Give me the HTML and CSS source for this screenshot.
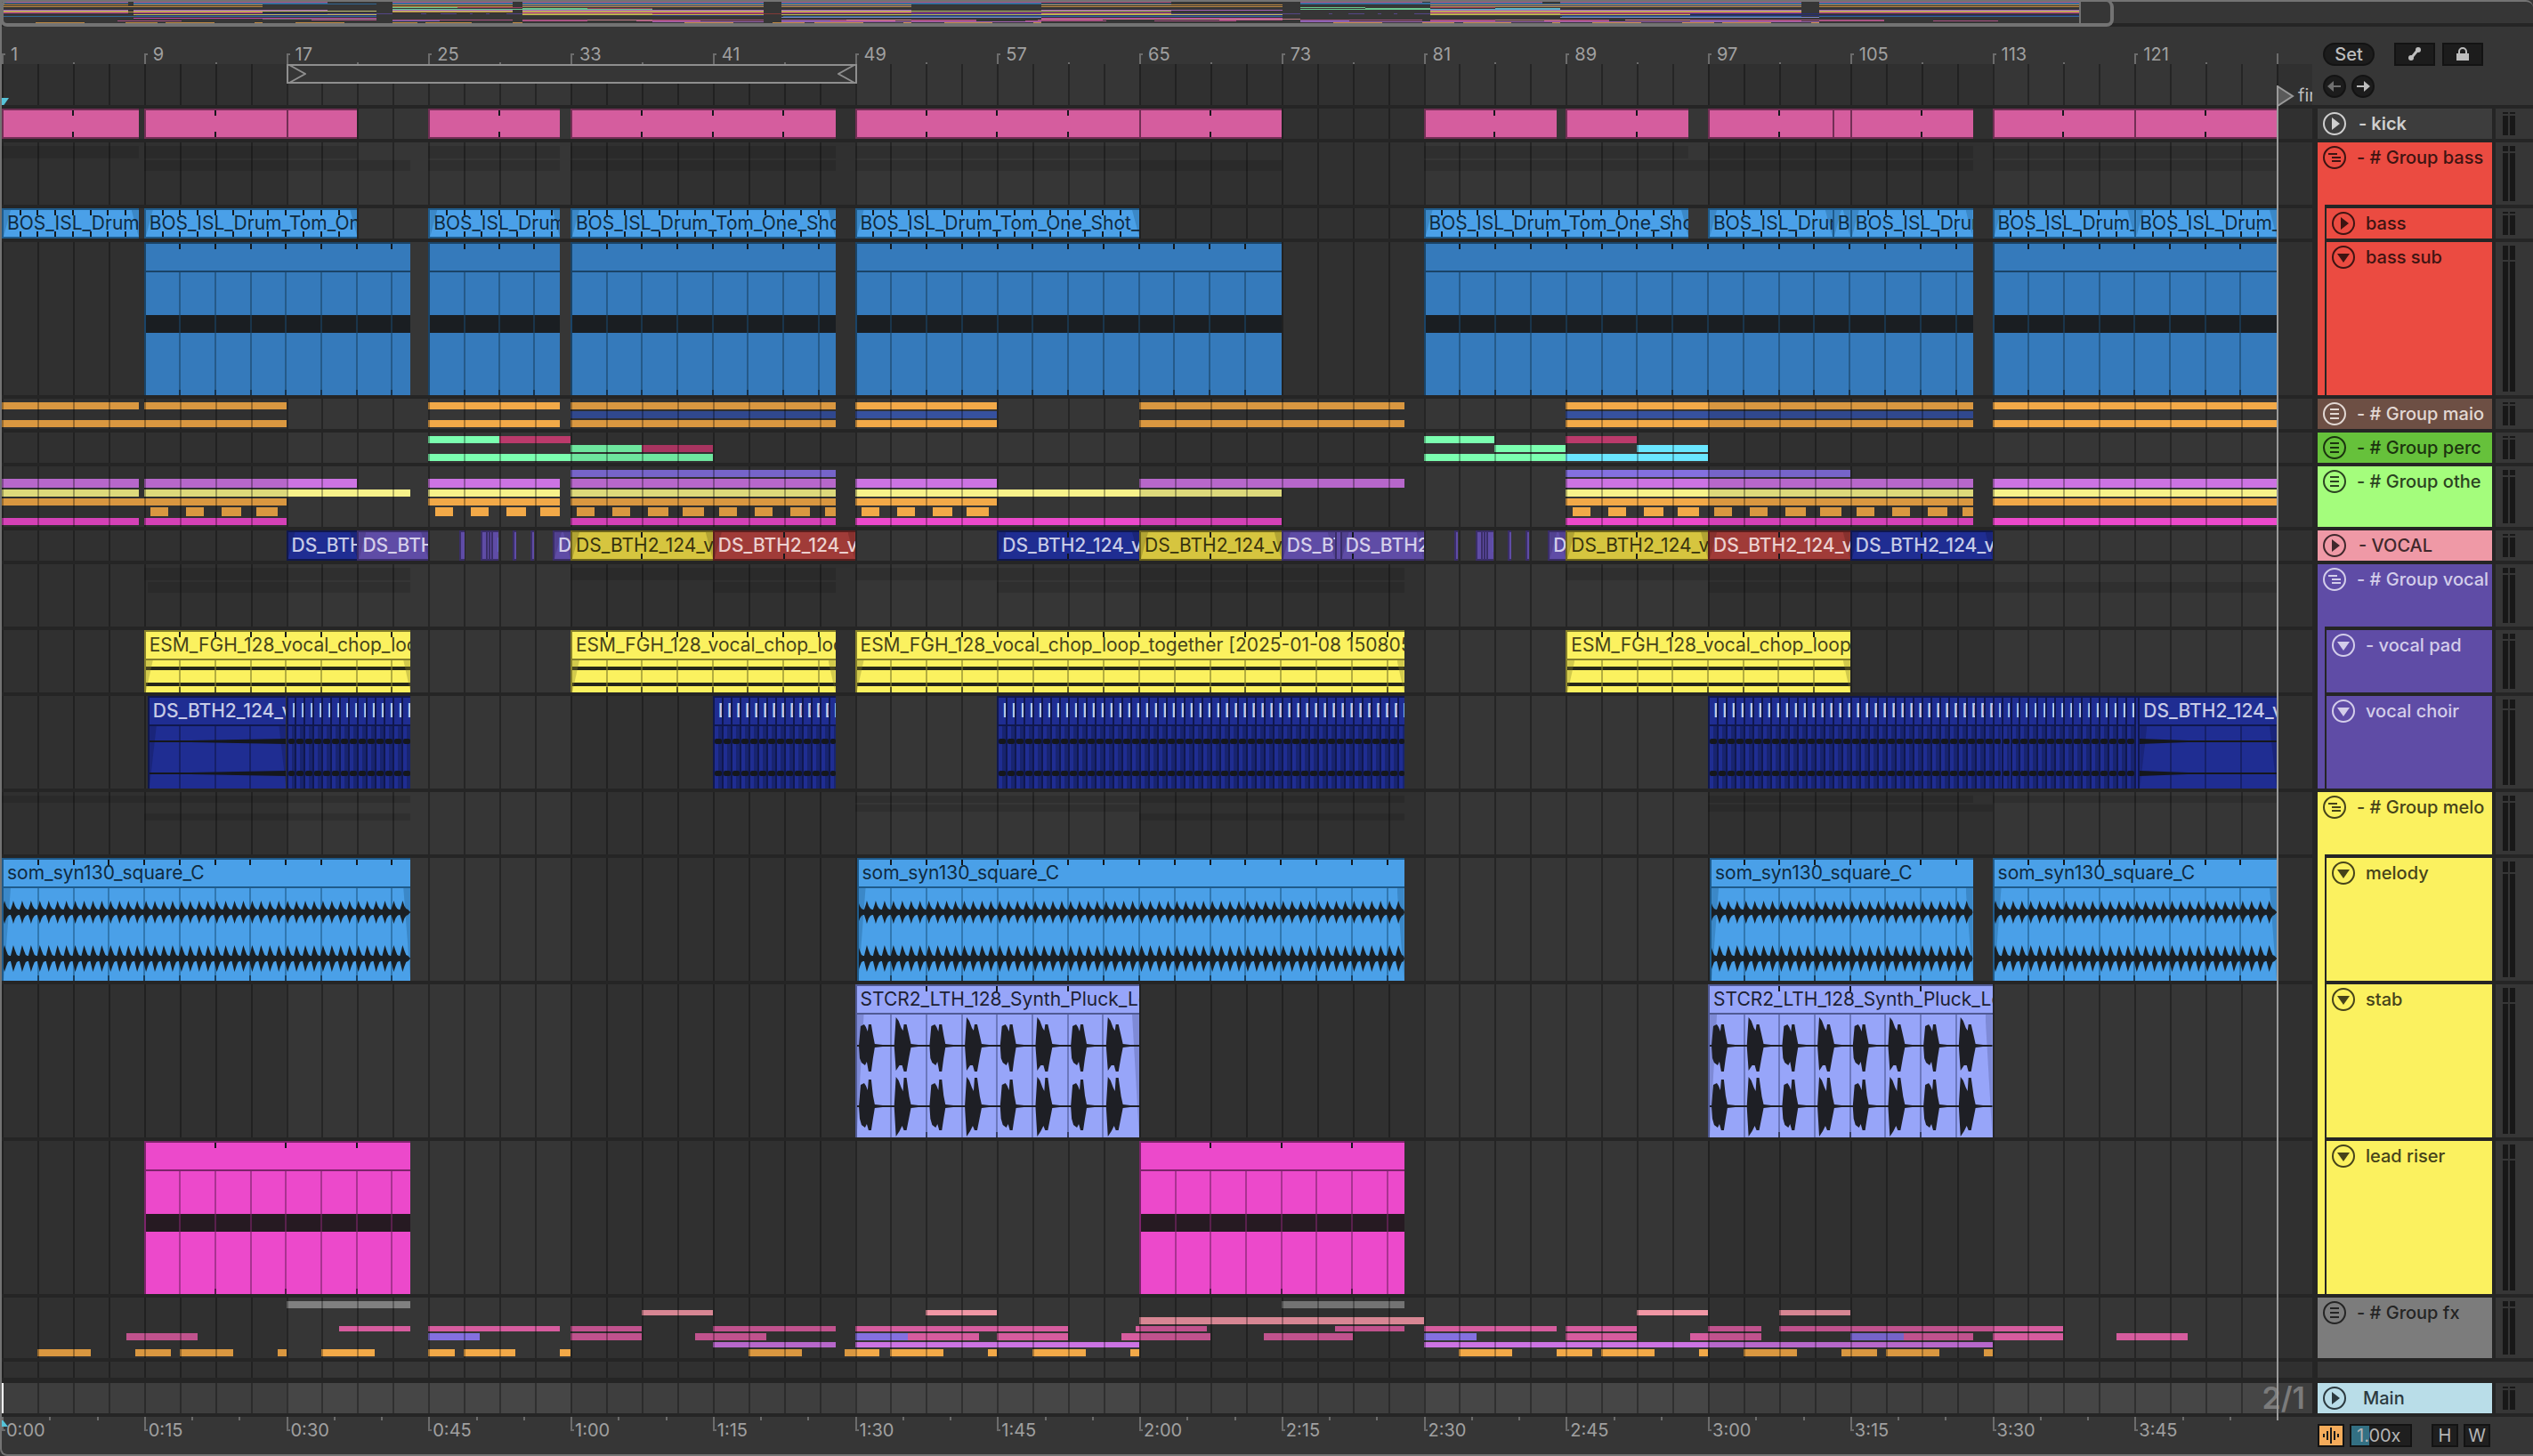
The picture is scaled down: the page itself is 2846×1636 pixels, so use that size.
FILE: index.html
```html
<!DOCTYPE html>
<html lang="en">
<head>
<meta charset="utf-8">
<title>Arrangement</title>
<link rel="stylesheet" href="styles.css">
</head>
<body>
<section class="overview" aria-label="Overview">
  <div class="overview-map" id="overview"></div>
  <div class="overview-frame"></div>
</section>

<header class="top">
  <div class="top-time">
    <div class="bar-ruler" id="bars"></div>
    <div class="scrub" id="scrub">
      <div class="loop"><svg viewBox="0 0 20 22"><path d="M1 1L19 11L1 21"/></svg><svg viewBox="0 0 20 22"><path d="M19 1L1 11L19 21"/></svg></div>
    </div>
  </div>
  <div class="top-tools">
    <div class="tool-row">
      <button class="pill" type="button">Set</button>
      <button class="square first" type="button" aria-label="Automation"><svg viewBox="0 0 46 26"><circle cx="27" cy="8" r="3"/><circle cx="19" cy="17" r="3"/><path d="M19 17L21 15L25 10L27 8" class="stroke"/></svg></button>
      <button class="square" type="button" aria-label="Lock envelopes"><svg viewBox="0 0 46 26"><path d="M16 12H30V20H16Z"/><path d="M19 13V10a4 4 0 0 1 8 0V13" class="stroke thin"/></svg></button>
    </div>
    <div class="tool-row">
      <button class="round" type="button" aria-label="Previous locator" disabled><svg viewBox="0 0 26 26"><path d="M5 13L12 7V19Z"/><path d="M11 13H20" class="stroke thin"/></svg></button>
      <button class="round" type="button" aria-label="Next locator"><svg viewBox="0 0 26 26"><path d="M21 13L14 7V19Z"/><path d="M6 13H15" class="stroke thin"/></svg></button>
    </div>
  </div>
</header>

<main class="tracks" id="tracks"></main>

<footer class="bottom">
  <div class="time-ruler" id="times"></div>
  <div class="bottom-tools">
    <button class="key wave" type="button" aria-label="Audio waveforms"><svg viewBox="0 0 30 26"><path d="M7 11V15M11 8V18M15 4V22M19 8V18M23 11V15"/></svg></button>
    <input class="zoom" type="text" value="1.00x" aria-label="Playback speed">
    <button class="key h" type="button">H</button>
    <button class="key" type="button">W</button>
  </div>
</footer>
<div class="locator-layer" id="locator"><div class="locator"><svg viewBox="0 0 20 24"><path d="M1 1L18 12L1 23Z"/></svg><span class="locator-name">fir</span></div></div>
<script src="app.js"></script>
</body>
</html>
```
FILE: styles.css
```css
* { box-sizing: border-box; }
html { background: #363636; }
body {
  margin: 0;
  min-height: 100vh;
  display: flex;
  flex-direction: column;
  position: relative;
  background: #363636;
  border-left: 2px solid #737373;
  border-bottom: 2px solid #737373;
  border-bottom-left-radius: 8px;
  color: #a0a0a0;
  font: 20px/24px Inter, "Liberation Sans", sans-serif;
  overflow-x: hidden;
}
button, input { font: inherit; padding: 0; margin: 0; border-radius: 0; }
svg { display: block; }

/* overview */
.overview {
  height: 30px;
  position: relative;
  border-top: 2px solid #737373;
  border-bottom: 4px solid #252525;
  border-top-right-radius: 8px;
}
.overview-map { position: relative; height: 24px; margin-left: 2px; overflow: hidden; }
.overview-map i { position: absolute; height: 1px; opacity: .72; }
.overview-map .end { width: 2px; height: 24px; background: #737373; opacity: 1; }
.overview-frame {
  position: absolute;
  inset: -2px auto -4px -2px;
  width: 83.5%;
  border: 4px solid #737373;
  border-top-width: 2px;
  border-radius: 8px;
}

/* top */
.top { display: flex; height: 88px; }
.top-time { flex: 1; min-width: 0; }
.bar-ruler { height: 42px; position: relative; overflow: hidden; }
.bar-ruler .tick { position: absolute; bottom: 0; height: 12px; width: 4px; border-left: 2px solid #6c6c6c; border-top: 2px solid #6c6c6c; }
.bar-ruler .tick.bare { border-top: 0; }
.bar-ruler .minor { position: absolute; bottom: 0; height: 2px; width: 2px; background: #6c6c6c; }
.bar-ruler .label { position: absolute; top: 19px; padding-left: 10px; }
.scrub { height: 46px; position: relative; overflow: hidden; }
.scrub .start { position: absolute; left: 0; bottom: 0; width: 8px; height: 8px; background: #56c3d8; clip-path: polygon(0 0, 100% 0, 30% 100%, 0 100%); }
.loop {
  position: absolute;
  top: 0;
  left: 12.308%;
  width: 24.692%;
  height: 22px;
  background: #363636;
  border: 2px solid #8f8f8f;
  display: flex;
  justify-content: space-between;
  z-index: 3;
}
.loop svg { width: 20px; height: 22px; margin-top: -2px; fill: none; stroke: #8f8f8f; stroke-width: 2; }
.top-tools { width: 248px; padding: 18px 0 0 12px; }
.tool-row { display: flex; margin-bottom: 10px; }
.tool-row button { height: 26px; background: #1c1c1c; border: 2px solid #131313; color: #bdbdbd; fill: currentColor; }
.tool-row svg { margin: -2px; }
.tool-row .stroke { fill: none; stroke: currentColor; stroke-width: 3; }
.tool-row .thin { stroke-width: 2; }
.tool-row .pill { width: 58px; border-radius: 13px; line-height: 22px; font-weight: 500; }
.square { width: 46px; margin-left: 8px; }
.square.first { margin-left: 22px; }
.square svg { width: 46px; height: 26px; }
.tool-row .round { width: 26px; border-radius: 50%; margin-right: 6px; }
.round svg { width: 26px; height: 26px; }
.round:disabled { opacity: 1; }
.tool-row .round:disabled { color: #6f6f6f; }

/* tracks */
.tracks { flex: 1; display: flex; flex-direction: column; border-top: 4px solid #252525; }
.track { display: flex; height: calc(var(--h) * 1px + 4px); flex: none; }
.track.filler { flex: 1 0 22px; height: auto; }
.track.filler .lane, .track.filler .side { border-bottom-width: 6px; }
.lane { flex: 1; min-width: 0; position: relative; overflow: hidden; border-bottom: 4px solid #252525; }
.side { width: 248px; display: flex; border-left: 6px solid #252525; }
.filler .side { border-bottom: 6px solid #252525; }
.shade { position: absolute; top: 0; bottom: 0; background: rgba(0, 0, 0, .1); }
.grid { position: absolute; top: 0; bottom: 0; width: 2px; background: rgba(0, 0, 0, .3); }
.over .shade, .over .grid { z-index: 2; }
.mini { position: absolute; }
.ghost { position: absolute; background: rgba(0, 0, 0, .13); }
.main-track .lane { background: #464646; }
.main-track .cursor { position: absolute; left: 0; top: 0; bottom: 0; width: 2px; background: #fff; }
.signature { position: absolute; right: 8px; top: 0; font-weight: 600; font-size: 34px; line-height: 34px; color: #7b7b7b; z-index: 3; }

/* clips */
.clip {
  position: absolute;
  top: 0;
  bottom: 0;
  overflow: hidden;
  background: var(--c);
  color: var(--t);
  border-top: 2px solid var(--e);
  border-left: 2px solid var(--e);
  font-size: 21px;
}
.clip.flat { border-bottom: 2px solid var(--e); }
.clip .name { position: relative; display: block; height: 30px; line-height: 29px; padding-left: 4px; white-space: nowrap; z-index: 1; }
.clip .line { position: absolute; left: 0; right: 0; top: 30px; height: 2px; background: var(--e); }
.clip .t { position: absolute; width: 2px; height: 6px; top: 0; background: #14181c; }
.clip .t.low { top: auto; bottom: 0; }
.clip .g { position: absolute; top: 32px; bottom: 0; width: 2px; background: var(--e); opacity: .6; }
.clip .band { position: absolute; left: 0; right: 0; background: var(--k); }
.clip .fade { position: absolute; top: 0; bottom: 0; width: 8px; background: var(--e); opacity: .35; }
.body .fade { top: 32px; }
.clip .fade.in { left: 0; clip-path: polygon(0 0, 100% 0, 0 100%); }
.clip .fade.out { right: 0; clip-path: polygon(0 0, 100% 100%, 100% 0); }
.clip svg { position: absolute; left: 0; top: 32px; width: 100%; height: calc(100% - 32px); fill: var(--k); }
.pink { --c: #d55d9e; --e: #722f55; --t: #2b1522; }
.sky { --c: #4aa0e8; --e: #1f5b8b; --t: #102a3e; --k: #1a2025; }
.blue { --c: #357abb; --e: #1a4468; --t: #102a3e; --k: #1a1e22; }
.navy { --c: #1f2d92; --e: #10184e; --t: #c6cae6; --k: #15171c; font-weight: 500; }
.violet { --c: #5f4ca6; --e: #3a2e68; --t: #d5cfea; font-weight: 500; }
.gold { --c: #d6c53f; --e: #6f661d; --t: #37330e; }
.red { --c: #a03b38; --e: #5a1f1e; --t: #ecd0cf; font-weight: 500; }
.lemon { --c: #fbf15f; --e: #86802c; --t: #46431a; --k: #25261a; }
.peri { --c: #97a5f9; --e: #505a94; --t: #1d2133; --k: #1e1f25; }
.magenta { --c: #ec49cb; --e: #7d246b; --t: #2b1522; --k: #261a22; }
.slices { border-left: 0; }
.slice { position: absolute; top: 0; bottom: 0; overflow: hidden; border-left: 2px solid #10184e; }
.slice::before { content: ""; position: absolute; top: 32px; bottom: 0; left: 4px; right: 0; background: #182470; }
.slice .blob { position: absolute; left: 0; right: 0; height: 6px; background: #15171c; border-radius: 2px; }

/* headers */
.head { width: 196px; position: relative; border-bottom: 4px solid #252525; background: var(--hc); color: var(--ht); display: flex; align-items: flex-start; padding: 4px 0 0 6px; font-weight: 500; white-space: nowrap; overflow: hidden; }
.head .label { line-height: 26px; margin-left: 12px; }
.head.plain .label { margin-left: 14px; }
.head.bright .label { font-weight: 600; }
.main-track .head .label { margin-left: 19px; }
.head.open { border-bottom: 0; }
.head.open::after { content: ""; position: absolute; left: 8px; right: 0; bottom: 0; height: 4px; background: #252525; }
.nest { width: 196px; display: flex; padding-left: 8px; background: var(--hc); }
.nest.last { border-bottom: 4px solid #252525; }
.nest .head { flex: 1; border-left: 2px solid #252525; }
.nest.last .head { border-bottom: 0; }
.nest .head .label { margin-left: 12px; }
.icon { width: 26px; height: 26px; flex: none; background: none; border: 0; color: inherit; }
.icon svg { width: 26px; height: 26px; fill: currentColor; }
.icon .ring { fill: none; stroke: currentColor; stroke-width: 2; }
.meter { flex: 1; border-left: 4px solid #252525; border-bottom: 4px solid #252525; padding: 4px 0 4px 8px; display: grid; grid-template-columns: 6px 6px; grid-template-rows: var(--p) 1fr; gap: 2px; }
.meter i { background: #181818; }

/* bottom */
.bottom { display: flex; height: 42px; }
.time-ruler { flex: 1; min-width: 0; position: relative; }
.time-ruler .tick { position: absolute; top: 0; height: 16px; width: 4px; border-left: 2px solid #6c6c6c; border-bottom: 2px solid #6c6c6c; }
.time-ruler .minor { position: absolute; top: 0; height: 4px; width: 2px; background: #6c6c6c; }
.time-ruler .label { position: absolute; top: 3px; padding-left: 5px; }
.time-ruler .start { position: absolute; left: 0; top: 4px; width: 7px; height: 7px; background: #56c3d8; clip-path: polygon(0 0, 20% 0, 100% 100%, 0 100%); }
.bottom-tools { width: 248px; display: flex; align-items: flex-start; padding: 8px 0 0 6px; }
.key { width: 30px; height: 26px; line-height: 22px; background: #1f1f1f; border: 2px solid #131313; color: #b5b5b5; margin-left: 6px; }
.key.h { margin-left: 22px; }
.key.wave { margin-left: 0; background: #f5ac5b; }
.key.wave svg { width: 30px; height: 26px; margin: -2px; fill: none; stroke: #1b1b1b; stroke-width: 2; }
.zoom { width: 70px; height: 26px; margin-left: 6px; padding-left: 6px; border: 2px solid #131313; background: linear-gradient(90deg, #337083 20px, #1f1f1f 20px); color: #b5b5b5; }

.locator-layer { position: absolute; left: 0; right: 248px; top: 96px; bottom: 38px; overflow: hidden; pointer-events: none; }
.locator { position: absolute; left: 98.4615%; top: 0; bottom: 0; border-left: 2px solid #9a9a9a; display: flex; align-items: flex-start; z-index: 4; }
.locator svg { width: 20px; height: 24px; margin-left: -2px; fill: #5a5a5a; stroke: #9a9a9a; stroke-width: 2; }
.locator-name { margin-left: 4px; line-height: 22px; color: #bdbdbd; }
```
FILE: app.js
```js
// The arrangement spans 130 bars; every position below is in bars.
const BARS = 130;
const pct = (bar) => ((bar - 1) / BARS) * 100 + "%";
const wide = (len) => (len / BARS) * 100 + "%";

function el(parent, cls, style, tag = "div") {
  const node = document.createElement(tag);
  if (cls) node.className = cls;
  Object.assign(node.style, style || {});
  parent.appendChild(node);
  return node;
}

const HUES = {
  orange: "#f2a948", blue: "#36519f", mint: "#7bffb0", wine: "#bb3a6b", cyan: "#6ae6ff",
  purple: "#8470e0", orchid: "#cc73e3", cream: "#f7f28a", magenta: "#ec49cb", grey: "#808080",
  blush: "#f096a4", rose: "#d65c9e", sky: "#3f8fd0", deep: "#2f78b5", lemon: "#fbf15f",
  navy: "#1f2d92", violet: "#5f4ca6", peri: "#97a5f9", pink: "#d55d9e", red: "#a03b38", gold: "#d6c53f"
};

const KICK = [[1, 8.7], [9, 17], [17, 21], [25, 32.4], [33, 47.9], [49, 65], [65, 73], [81, 88.5], [89, 95.9], [97, 104], [104, 105], [105, 111.9], [113, 121], [121, 129]];
const BASS = [[1, 8.7], [9, 21], [25, 32.4], [33, 47.9], [49, 65], [81, 95.9], [97, 104], [104, 105], [105, 111.9], [113, 121], [121, 129]];
const SUB = [[9, 24], [25, 32.4], [33, 47.9], [49, 73], [81, 111.9], [113, 129]];
const PAD = [[9, 24], [33, 47.9], [49, 79.9], [89, 105]];
const CHOIR = [[9.2, 24], [41, 47.9], [57, 79.9], [97, 129]];
const MELODY = [[1, 24], [49.1, 79.9], [97.1, 111.9], [113, 129]];
const STAB = [[49, 65], [97, 113]];
const LEAD = [[9, 24], [65, 79.9]];

const VOCAL = [
  [17, 21, "navy", "DS_BTH2"], [21, 25, "violet", "DS_BTH2"],
  [26.75, 27.05, "violet"], [27.95, 28.25, "violet"], [28.25, 28.4, "violet"], [28.4, 28.55, "violet"], [28.55, 28.95, "violet", "D"],
  [29.75, 29.95, "violet"], [30.75, 30.95, "violet"], [32, 33, "violet", "D"],
  [33, 41, "gold", "DS_BTH2_124_v"], [41, 49, "red", "DS_BTH2_124_v"],
  [57, 65, "navy", "DS_BTH2_124_v"], [65, 73, "gold", "DS_BTH2_124_v"],
  [73, 76, "violet", "DS_BTH"], [76, 76.3, "violet"], [76.3, 81, "violet", "DS_BTH2"],
  [82.75, 82.95, "violet"], [83.95, 84.25, "violet"], [84.25, 84.4, "violet"], [84.4, 84.55, "violet"], [84.55, 84.95, "violet", "D"],
  [85.75, 85.95, "violet"], [86.75, 86.95, "violet"], [88, 89, "violet", "D"],
  [89, 97, "gold", "DS_BTH2_124_v"], [97, 105, "red", "DS_BTH2_124_v"], [105, 113, "navy", "DS_BTH2_124_v"]
];

const paint = (list, hue) => list.map(([a, b]) => [a, b, hue]);
const blocks = [];
[[9, 17], [25, 33], [33, 49], [49, 57], [89, 113]].forEach(([from, to]) => {
  for (let b = from, i = 0; b < to; b += 2, i++) {
    const stop = Math.min(b + 1.37 + [0, 0, .12, .15][i % 4], to === 33 ? 32.4 : to === 49 ? 47.9 : to === 113 ? 111.9 : 999);
    blocks.push([b + .37 - (i % 4 === 3 ? .07 : 0), stop, "orange"]);
  }
});

// Folded groups: [top, height, clips]
const MAIO = [
  [4, 8, paint([[1, 8.7], [9, 17], [25, 32.4], [33, 47.9], [49, 57], [65, 79.9], [89, 111.9], [113, 129]], "orange")],
  [14, 8, paint([[33, 47.9], [49, 57], [89, 111.9]], "blue")],
  [24, 8, paint([[1, 17], [25, 32.4], [33, 47.9], [49, 57], [65, 79.9], [89, 111.9], [113, 129]], "orange")]
];
const PERC = [
  [4, 8, [[25, 29, "mint"], [29, 33, "wine"], [81, 85, "mint"], [89, 93, "wine"]]],
  [14, 8, [[33, 37, "mint"], [37, 41, "wine"], [85, 89, "mint"], [93, 97, "cyan"]]],
  [24, 8, [[25, 33, "mint"], [33, 41, "mint"], [81, 89, "mint"], [89, 97, "cyan"]]]
];
const OTHER = [
  [4, 8, paint([[33, 47.9], [89, 105]], "purple")],
  [14, 10, paint([[1, 8.7], [9, 21], [25, 32.4], [33, 47.9], [49, 57], [65, 79.9], [89, 111.9], [113, 129]], "orchid")],
  [26, 8, paint([[1, 8.7], [9, 24], [25, 32.4], [33, 47.9], [49, 73], [89, 111.9], [113, 129]], "cream")],
  [36, 8, paint([[1, 17], [25, 32.4], [33, 47.9], [49, 57], [89, 111.9], [113, 129]], "orange")],
  [46, 10, blocks],
  [58, 8, paint([[1, 8.7], [9, 17], [33, 47.9], [49, 73], [89, 111.9], [113, 129]], "magenta")]
];
const FX = [
  [4, 8, paint([[17, 24], [73, 79.9]], "grey")],
  [14, 6, paint([[37, 41], [53, 57], [93, 97], [101, 105]], "blush")],
  [22, 8, paint([[65, 81]], "blush")],
  [32, 6, paint([[20, 24], [25, 32.4], [33, 37], [41, 47.9], [49, 61], [64.8, 68.8], [76, 79.9], [81, 88.5], [89, 93], [97, 100], [101, 117]], "rose")],
  [40, 8, [[8, 12, "rose"], [25, 27.9, "purple"], [33, 37, "rose"], [40, 44, "rose"], [49, 52, "purple"], [52, 56, "rose"], [57, 61, "rose"], [64, 69, "rose"], [72, 77, "rose"], [81, 84, "purple"], [89, 93, "rose"], [96, 100, "rose"], [105, 108, "purple"], [108, 111.9, "rose"], [113, 117, "rose"], [120, 124, "rose"]]],
  [50, 6, paint([[41, 47.9], [49, 65], [81, 113]], "orchid")],
  [58, 8, paint([[3, 6], [8.5, 10.5], [11, 14], [16.5, 17], [19, 22], [25, 26.5], [27, 29.9], [32.4, 33], [43, 46], [48.4, 50.4], [51, 54], [56.5, 57], [59, 62], [64.5, 65], [83, 86], [88.5, 90.5], [91, 94], [96.5, 97], [99, 102], [104.5, 106.5], [107, 110], [112.5, 113]], "orange")]
];

const TRACKS = [
  { name: "- kick", h: 34, hc: "#3d3d3d", ht: "#cfcfcf", icon: "play", bright: 1, draw: (l) => KICK.forEach((c) => flat(l, c, "pink", "", 4)) },
  { name: "- # Group bass", h: 70, hc: "#eb4b41", ht: "#3e1412", icon: "open", p: 6, ghosts: [[4, 14, BASS], [20, 12, SUB]] },
  { name: "bass", h: 34, hc: "#eb4b41", ht: "#3e1412", icon: "play", nest: 1, draw: (l) => BASS.forEach((c) => flat(l, c, "sky", "BOS_ISL_Drum_Tom_One_Shot_", 1)) },
  { name: "bass sub", h: 172, hc: "#eb4b41", ht: "#3e1412", icon: "down", nest: 1, last: 1, p: 16, draw: (l) => SUB.forEach((c) => midi(l, c, "blue", 2, 80, 20)) },
  { name: "- # Group maio", h: 34, hc: "#6d4f44", ht: "#e2d8d3", icon: "fold", minis: MAIO },
  { name: "- # Group perc", h: 34, hc: "#66c13b", ht: "#1b330f", icon: "fold", minis: PERC },
  { name: "- # Group othe", h: 68, hc: "#a4fd7c", ht: "#2b4321", icon: "fold", p: 6, minis: OTHER },
  { name: "- VOCAL", h: 34, hc: "#ef99a6", ht: "#40282c", icon: "play", draw: (l) => VOCAL.forEach(([a, b, hue, text]) => flat(l, [a, b], hue, text || "", 4)) },
  { name: "- # Group vocal", h: 70, hc: "#5f4ca6", ht: "#d3cdea", icon: "open", p: 6, ghosts: [[4, 14, PAD], [20, 12, CHOIR]] },
  { name: "- vocal pad", h: 70, hc: "#5f4ca6", ht: "#d3cdea", icon: "down", nest: 1, p: 6, draw: (l) => PAD.forEach((c) => pad(l, c)) },
  { name: "vocal choir", h: 104, hc: "#5f4ca6", ht: "#d3cdea", icon: "down", nest: 1, last: 1, p: 10, draw: choir },
  { name: "- # Group melo", h: 70, hc: "#fbf15f", ht: "#46431a", icon: "open", p: 6, ghosts: [[4, 8, [[1, 24], [49, 79.9], [97, 111.9], [113, 129]]], [14, 8, STAB], [24, 8, LEAD]] },
  { name: "melody", h: 138, hc: "#fbf15f", ht: "#46431a", icon: "down", nest: 1, p: 12, draw: (l) => MELODY.forEach((c) => melody(l, c)) },
  { name: "stab", h: 172, hc: "#fbf15f", ht: "#46431a", icon: "down", nest: 1, p: 16, draw: (l) => STAB.forEach((c) => stab(l, c)) },
  { name: "lead riser", h: 172, hc: "#fbf15f", ht: "#46431a", icon: "down", nest: 1, last: 1, p: 16, draw: (l) => LEAD.forEach((c) => midi(l, c, "magenta", 4, 80, 20)) },
  { name: "- # Group fx", h: 68, hc: "#7c7c7c", ht: "#242424", icon: "fold", p: 6, minis: FX },
  { filler: 1 },
  { name: "Main", h: 34, hc: "#b9dde8", ht: "#2c3a3f", icon: "play", main: 1 }
];

const ICONS = {
  play: '<path d="M10 6L19 13L10 20Z"/>',
  down: '<path d="M6 9H20L13 19Z"/>',
  open: '<path d="M6 8H16V10H6ZM10 12H20V14H10ZM10 16H20V18H10Z"/>',
  fold: '<path d="M8 7H18V9H8ZM8 12H18V14H8ZM8 17H18V19H8Z"/>'
};

function clip(lane, [a, b], cls) {
  return el(lane, "clip " + cls, { left: pct(a), width: wide(b - a) });
}
// Marks at every `step` bars inside a clip
function marks(node, [a, b], step, cls) {
  for (let m = Math.floor((a - 1) / step) * step + 1 + step; m < b - .05; m += step) {
    if (m > a + .05) el(node, cls, { left: ((m - a) / (b - a)) * 100 + "%", marginLeft: "-2px" }, "i");
  }
}
function fades(node) {
  el(node, "fade in", null, "i");
  el(node, "fade out", null, "i");
}
function flat(lane, c, hue, text, step) {
  const node = clip(lane, c, "flat " + hue);
  if (hue !== "pink" && c[1] - c[0] > .9) fades(node);
  marks(node, c, step, "t");
  marks(node, c, step, "t low");
  if (text) el(node, "name", null, "span").textContent = text;
}
function tall(lane, c, hue, text, step) {
  const node = clip(lane, c, "body " + hue);
  if (text) el(node, "name", null, "span").textContent = text;
  el(node, "line", null, "i");
  marks(node, c, step, "t");
  marks(node, c, step, "t low");
  return node;
}
function band(node, top, height) {
  el(node, "band", { top: top + "px", height: height + "px" }, "i");
}
function midi(lane, c, hue, step, top, height) {
  const node = tall(lane, c, hue, "", step);
  band(node, top, height);
  marks(node, c, 2, "g");
}
function pad(lane, c) {
  const node = tall(lane, c, "lemon", "ESM_FGH_128_vocal_chop_loop_together [2025-01-08 150805]", 2);
  band(node, 39, 4);
  band(node, 57, 4);
  marks(node, c, 2, "g");
  fades(node);
}
function shape(node, width, height, d) {
  node.insertAdjacentHTML("beforeend", `<svg viewBox="0 0 ${width} ${height}" preserveAspectRatio="none"><path d="${d}"/></svg>`);
}
function longVocal(lane, c, text, grows) {
  const node = tall(lane, c, "navy", text, 99);
  marks(node, c, 2, "g");
  fades(node);
  const w = (c[1] - c[0]) * 20, [l, r] = grows ? [1, 3] : [3, 1];
  const wedge = (y) => `M0 ${y - l}H${w * .3}L${w} ${y - r}V${y + r}L${w * .3} ${y + l}H0Z`;
  const taper = (y) => `M0 ${y - 3}L${w * .35} ${y - 1}H${w}V${y + 1}H${w * .35}L0 ${y + 3}Z`;
  shape(node, w, 70, grows ? wedge(17) + wedge(53) : taper(17) + taper(53));
}
function choir(lane) {
  longVocal(lane, [9.2, 17], "DS_BTH2_124_v", true);
  [[17, 24], [41, 47.9], [57, 79.9], [97, 121]].forEach(([a, b]) => {
    const node = clip(lane, [a, b], "slices body navy");
    for (let s = a; s < b; s += .5) {
      const part = el(node, "slice", { left: ((s - a) / (b - a)) * 100 + "%", width: (Math.min(.5, b - s) / (b - a)) * 100 + "%" });
      el(part, "name", null, "span").textContent = "D";
      el(part, "blob", { top: "46px" }, "i");
      el(part, "blob", { top: "82px" }, "i");
    }
    el(node, "line", null, "i");
  });
  clip(lane, [121, 121.2], "body navy");
  longVocal(lane, [121.2, 129], "DS_BTH2_124_v", false);
}
function melody(lane, c) {
  const node = tall(lane, c, "sky", "som_syn130_square_C", 2);
  marks(node, c, 2, "g");
  fades(node);
  const w = (c[1] - c[0]) * 20;
  const wave = (mid, amp) => {
    let up = `M0 ${mid}`, down = "";
    for (let s = Math.floor(c[0] * 2) / 2; s < c[1]; s += .5) {
      const x = (s - c[0]) * 20;
      up += `L${x - 2} ${mid - 3}L${x} ${mid - amp + 4}L${x + 1} ${mid - amp}L${x + 3} ${mid - amp + 6}L${x + 5} ${mid - 4}L${x + 7} ${mid - 3}`;
      down = `L${x + 7} ${mid + 3}L${x + 5} ${mid + 4}L${x + 3} ${mid + amp - 6}L${x + 1} ${mid + amp}L${x} ${mid + amp - 4}L${x - 2} ${mid + 3}` + down;
    }
    return up + `L${w} ${mid}` + down + "Z";
  };
  shape(node, w, 104, wave(27, 13) + wave(79, 15));
}
function stab(lane, c) {
  const node = tall(lane, c, "peri", "STCR2_LTH_128_Synth_Pluck_Loop", 4);
  marks(node, c, 2, "g");
  fades(node);
  let d = "M0 34H320V36H0ZM0 102H320V104H0Z";
  for (let i = 0; i < 8; i++) {
    const x = i * 40;
    const soft = (y, t1, b1, t2, b2) => `M${x + 2} ${y}L${x + 4} ${y - t1 + 2}L${x + 8} ${y - t1}L${x + 10} ${y - t1 + 3}L${x + 12} ${y - t1 + 8}L${x + 13} ${y - t2}H${x + 16}L${x + 18} ${y - 12}L${x + 20} ${y - 2}L${x + 38} ${y}L${x + 20} ${y + 2}L${x + 18} ${y + 14}L${x + 16} ${y + b2}H${x + 13}L${x + 11} ${y + b1 - 4}L${x + 9} ${y + b1}L${x + 5} ${y + b1 - 3}L${x + 3} ${y + 14}Z`;
    const hard = (y, t1, b1, t2, b2) => `M${x + 2} ${y}L${x + 4} ${y - t1}L${x + 7} ${y - t1 + 4}L${x + 10} ${y - t1 + 12}L${x + 12} ${y - 17}L${x + 13} ${y - t2}H${x + 16}L${x + 19} ${y - 11}L${x + 21} ${y - 2}L${x + 38} ${y}L${x + 21} ${y + 2}L${x + 19} ${y + 12}L${x + 16} ${y + b2}H${x + 13}L${x + 11} ${y + 22}L${x + 8} ${y + b1 - 6}L${x + 4} ${y + b1}Z`;
    d += i % 2 ? hard(35, 32, 28, 24, 29) + hard(103, 33, 34, 32, 27) : soft(35, 24, 22, 24, 29) + soft(103, 26, 24, 30, 27);
  }
  shape(node, 320, 138, d);
}

function backdrop(lane) {
  for (let b = 1; b < BARS; b += 32) el(lane, "shade", { left: pct(b), width: wide(Math.min(16, BARS + 1 - b)) }, "i");
  for (let b = 1; b <= BARS; b += 2) el(lane, "grid", { left: pct(b) }, "i");
}

const tracks = document.getElementById("tracks");
TRACKS.forEach((t) => {
  const row = el(tracks, "track" + (t.minis || t.ghosts ? " over" : "") + (t.main ? " main-track" : "") + (t.filler ? " filler" : ""));
  if (t.h) row.style.setProperty("--h", t.h);
  const lane = el(row, "lane");
  backdrop(lane);
  const side = el(row, "side");
  if (t.filler) return;
  if (t.draw) t.draw(lane);
  (t.minis || []).forEach(([top, h, list]) => list.forEach(([a, b, hue]) =>
    el(lane, "mini", { left: pct(a), width: wide(b - a), top: top + "px", height: h + "px", background: HUES[hue] })));
  (t.ghosts || []).forEach(([top, h, list]) => list.forEach(([a, b]) =>
    el(lane, "ghost", { left: pct(a), width: wide(b - a), top: top + "px", height: h + "px" })));
  if (t.main) {
    el(lane, "cursor");
    el(lane, "signature").textContent = "2/1";
  }
  let holder = side;
  if (t.nest) holder = el(side, "nest" + (t.last ? " last" : ""));
  const head = el(holder, "head" + (t.icon === "open" ? " open" : "") + (t.icon === "play" ? " plain" : "") + (t.bright ? " bright" : ""));
  [holder, head].forEach((n) => { n.style.setProperty("--hc", t.hc); n.style.setProperty("--ht", t.ht); });
  const button = el(head, "icon", null, "button");
  button.type = "button";
  button.setAttribute("aria-label", "Unfold " + t.name);
  button.innerHTML = `<svg viewBox="0 0 26 26"><circle class="ring" cx="13" cy="13" r="12"/>${ICONS[t.icon]}</svg>`;
  el(head, "label", null, "span").textContent = t.name;
  const meter = el(side, "meter");
  meter.style.setProperty("--p", (t.p || 2) + "px");
  for (let i = 0; i < 4; i++) el(meter, "", null, "i");
});

// Rulers
const bars = document.getElementById("bars");
const times = document.getElementById("times");
for (let b = 1; b <= 129; b += 4) {
  if ((b - 1) % 8) { el(bars, "minor", { left: pct(b) }, "i"); continue; }
  el(bars, b === 129 ? "tick bare" : "tick", { left: pct(b) }, "i");
  if (b === 129) continue;
  el(bars, "label", { left: pct(b) }, "span").textContent = b;
  const sec = ((b - 1) / 8) * 15;
  el(times, "tick", { left: pct(b) }, "i");
  el(times, "minor", { left: pct(b + 8 / 3) }, "i");
  el(times, "minor", { left: pct(b + 16 / 3) }, "i");
  el(times, "label", { left: pct(b) }, "span").textContent = Math.floor(sec / 60) + ":" + String(sec % 60).padStart(2, "0");
}
el(times, "start", null, "i");
const scrub = document.getElementById("scrub");
backdrop(scrub);
el(scrub, "start", null, "i");

// Overview: one pixel row per lane of clips
const map = document.getElementById("overview");
const OVERVIEW_BARS = 156;
const rows = [
  paint(KICK, "pink"), paint(BASS, "sky"), paint(SUB, "deep"),
  ...MAIO.map((r) => r[2]), ...PERC.map((r) => r[2]),
  OTHER[1][2], OTHER[2][2], OTHER[3][2], OTHER[5][2],
  VOCAL, paint(PAD, "lemon"), paint(CHOIR, "navy"), paint(MELODY, "deep"), paint(STAB, "peri"), paint(LEAD, "magenta"),
  [...FX[0][2], ...FX[2][2]], [...FX[3][2], ...FX[1][2]], FX[4][2], FX[5][2], FX[6][2]
];
rows.forEach((list, i) => list.forEach(([a, b, hue]) =>
  el(map, "", { left: ((a - 1) / OVERVIEW_BARS) * 100 + "%", width: ((b - a) / OVERVIEW_BARS) * 100 + "%", top: i + "px", background: HUES[hue] }, "i")));
el(map, "end", { left: (128 / OVERVIEW_BARS) * 100 + "%" }, "i");
```
